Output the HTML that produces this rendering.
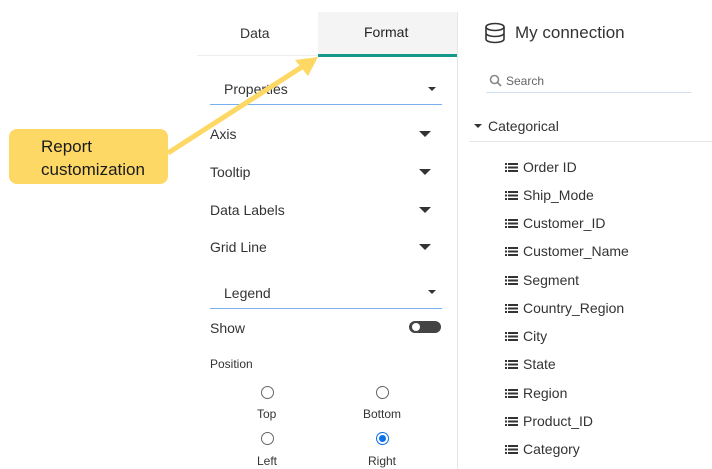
<!DOCTYPE html>
<html><head><style>
body{margin:0;width:712px;height:469px;background:#fff;font-family:"Liberation Sans",sans-serif;position:relative;overflow:hidden;color:#333}
.a{position:absolute;white-space:nowrap}
.tri{position:absolute;width:0;height:0;border-left:6px solid transparent;border-right:6px solid transparent;border-top:6px solid #333}
.tris{position:absolute;width:0;height:0;border-left:4px solid transparent;border-right:4px solid transparent;border-top:4px solid #333}
.f{font-size:14px}
.rad{position:absolute;width:11px;height:11px;border:1px solid #666;border-radius:50%}
.li{position:absolute;left:505px;font-size:14px;color:#333}
.li:before{content:"";position:absolute;left:3px;top:4px;width:10px;height:9px;background:repeating-linear-gradient(#333 0 2px,transparent 2px 3.5px)}
.li:after{content:"";position:absolute;left:0;top:4px;width:2px;height:9px;background:repeating-linear-gradient(#333 0 2px,transparent 2px 3.5px)}
.li span{margin-left:18px}
</style></head><body>
<div class="a" style="left:318px;top:12px;width:139px;height:42px;background:#f4f4f4"></div>
<div class="a" style="left:197px;top:55px;width:260px;height:1px;background:#eee"></div>
<div class="a" style="left:318px;top:54px;width:139px;height:3px;background:#16998a"></div>
<div class="a" style="left:457px;top:12px;width:1px;height:457px;background:#e6e6e6"></div>
<div class="a f" style="left:240px;top:25px">Data</div>
<div class="a f" style="left:364px;top:24px;color:#222">Format</div>
<div class="a f" style="left:224px;top:81px">Properties</div>
<div class="tris" style="left:428px;top:87px"></div>
<div class="a" style="left:210px;top:104px;width:232px;height:1px;background:#7aaef0"></div>
<div class="a f" style="left:210px;top:126px">Axis</div><div class="tri" style="left:419px;top:131px"></div>
<div class="a f" style="left:210px;top:164px">Tooltip</div><div class="tri" style="left:419px;top:169px"></div>
<div class="a f" style="left:210px;top:202px">Data Labels</div><div class="tri" style="left:419px;top:207px"></div>
<div class="a f" style="left:210px;top:239px">Grid Line</div><div class="tri" style="left:419px;top:244px"></div>
<div class="a f" style="left:224px;top:285px">Legend</div>
<div class="tris" style="left:428px;top:290px"></div>
<div class="a" style="left:210px;top:308px;width:232px;height:1px;background:#7aaef0"></div>
<div class="a f" style="left:210px;top:320px">Show</div>
<div class="a" style="left:409px;top:321px;width:32px;height:12px;border-radius:6px;background:#444"></div>
<div class="a" style="left:412px;top:323px;width:8px;height:8px;border-radius:50%;background:#fff"></div>
<div class="a" style="left:210px;top:357px;font-size:12px">Position</div>
<div class="rad" style="left:261px;top:386px"></div>
<div class="rad" style="left:376px;top:386px"></div>
<div class="a" style="left:257px;top:407px;font-size:12px">Top</div>
<div class="a" style="left:363px;top:407px;font-size:12px">Bottom</div>
<div class="rad" style="left:261px;top:432px"></div>
<div class="rad" style="left:376px;top:432px;border-color:#0b72e8"></div>
<div class="a" style="left:379px;top:435px;width:7px;height:7px;border-radius:50%;background:#0b72e8"></div>
<div class="a" style="left:257px;top:454px;font-size:12px">Left</div>
<div class="a" style="left:368px;top:454px;font-size:12px">Right</div>
<svg class="a" style="left:0;top:0" width="712" height="469"><path d="M168 153 L305 65" stroke="#fdd865" stroke-width="5"/><path d="M318 57 L295 60 L308 76Z" fill="#fdd865"/></svg>
<div class="a" style="left:9px;top:129px;width:159px;height:55px;background:#fdd865;border-radius:8px"></div>
<div class="a" style="left:41px;top:135px;font-size:17px;line-height:23px;color:#1a1a1a">Report<br>customization</div>
<svg class="a" style="left:484px;top:22px" width="22" height="22" viewBox="0 0 22 22" fill="none" stroke="#333" stroke-width="1.6"><ellipse cx="11" cy="5" rx="9" ry="3.5"/><path d="M2 5v12c0 2 4 3.5 9 3.5s9-1.5 9-3.5V5M2 11c0 2 4 3.5 9 3.5s9-1.5 9-3.5"/></svg>
<div class="a" style="left:515px;top:23px;font-size:17px">My connection</div>
<svg class="a" style="left:489px;top:74px" width="13" height="13" viewBox="0 0 13 13" fill="none" stroke="#888" stroke-width="1.6"><circle cx="5.5" cy="5.5" r="4"/><path d="M8.5 8.5l3.5 3.5"/></svg>
<div class="a" style="left:506px;top:74px;font-size:12px;color:#666">Search</div>
<div class="a" style="left:486px;top:92px;width:205px;height:1px;background:#cfe0f3"></div>
<div class="tris" style="left:474px;top:124px"></div>
<div class="a f" style="left:488px;top:118px">Categorical</div>
<div class="a" style="left:469px;top:141px;width:243px;height:1px;background:#e6e6e6"></div>
<div class="li" style="top:159px"><span>Order ID</span></div>
<div class="li" style="top:187px"><span>Ship_Mode</span></div>
<div class="li" style="top:215px"><span>Customer_ID</span></div>
<div class="li" style="top:243px"><span>Customer_Name</span></div>
<div class="li" style="top:272px"><span>Segment</span></div>
<div class="li" style="top:300px"><span>Country_Region</span></div>
<div class="li" style="top:328px"><span>City</span></div>
<div class="li" style="top:356px"><span>State</span></div>
<div class="li" style="top:385px"><span>Region</span></div>
<div class="li" style="top:413px"><span>Product_ID</span></div>
<div class="li" style="top:441px"><span>Category</span></div>
</body></html>
